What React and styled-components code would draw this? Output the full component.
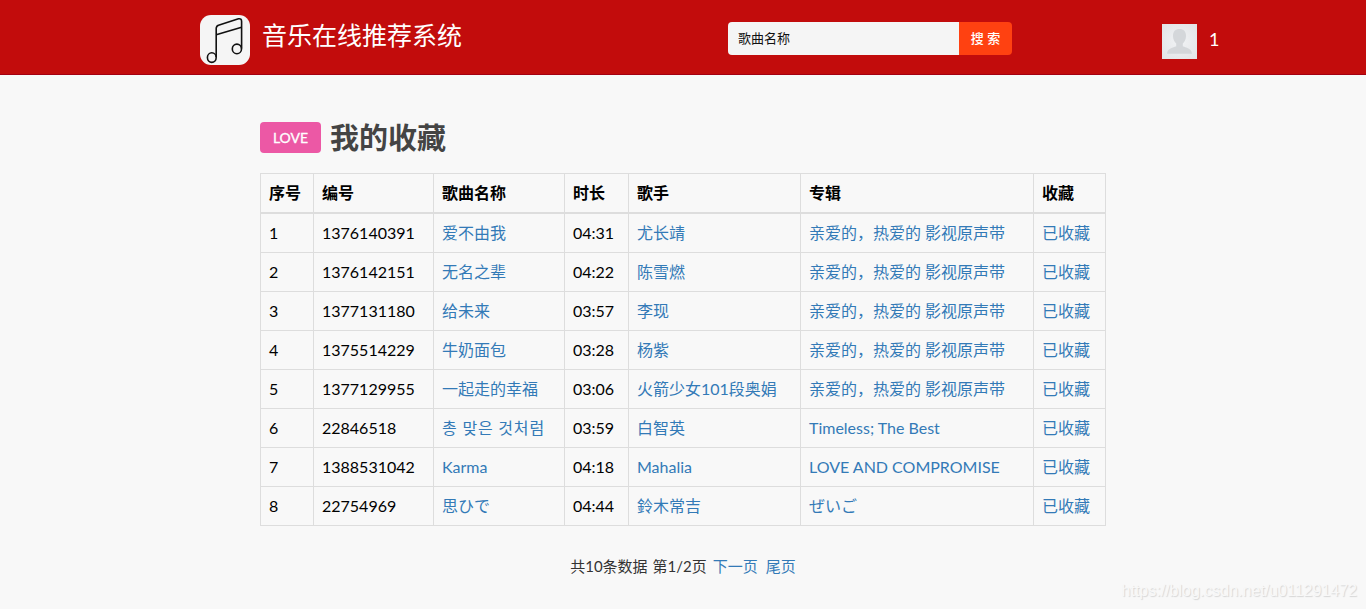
import React from "react";
import styled, { createGlobalStyle } from "styled-components";

const GlobalStyle = createGlobalStyle`
  *, *::before, *::after { box-sizing: border-box; }
  html, body { margin: 0; padding: 0; }
  body {
    background: #f8f8f8;
    color: #000;
    font-family: Lato, "Noto Sans CJK SC", sans-serif;
    font-size: 16px;
  }
`;

const Page = styled.div`
  position: relative;
  width: 1366px;
  height: 609px;
  overflow: hidden;
`;

const Header = styled.header`
  display: flex;
  align-items: flex-start;
  height: 75px;
  padding-left: 200px;
  background: #c20c0c;
  border-bottom: 1px solid #a40011;
`;

const Logo = styled.svg`
  display: block;
  flex: none;
  width: 50px;
  height: 50px;
  margin-top: 15px;
`;

const SiteName = styled.div`
  width: 466px;
  margin: 15px 0 0 12px;
  color: #fff;
  font-size: 25px;
  line-height: 40px;
  white-space: nowrap;
`;

const Search = styled.form`
  display: flex;
  width: 284px;
  height: 33px;
  margin-top: 22px;
  border-radius: 4px;
  overflow: hidden;
  font-size: 13px;
  line-height: 33px;
`;

const SearchInput = styled.input`
  width: 231px;
  height: 33px;
  padding: 0 10px;
  border: 0;
  outline: 0;
  background: #f5f5f5;
  color: #111;
  font: inherit;

  &::placeholder {
    color: #111;
    opacity: 1;
  }
`;

const SearchButton = styled.button`
  flex: 1;
  padding: 0;
  border: 0;
  background: #ff4111;
  color: #fff;
  font: inherit;
  font-weight: 500;
  white-space: pre;
`;

const User = styled.div`
  display: flex;
  margin: 24px 0 0 150px;
  color: #fff;
  font-size: 18px;
  line-height: 31px;
`;

const Avatar = styled.svg`
  display: block;
  width: 35px;
  height: 35px;
  margin-right: 12px;
`;

const Main = styled.main`
  width: 846px;
  margin: 0 auto;
  padding-top: 43px;
`;

const TitleRow = styled.div`
  display: flex;
  align-items: center;
  height: 39px;
  margin-bottom: 16px;
`;

const LoveTag = styled.span`
  width: 61px;
  height: 31px;
  margin-right: 9px;
  border-radius: 4px;
  background: #ec58a5;
  color: #fff;
  font-size: 14px;
  font-weight: 400;
  line-height: 32px;
  text-align: center;
  -webkit-text-stroke: 0.3px #fff;
`;

const Title = styled.h1`
  margin: 0;
  color: #444;
  font-size: 29px;
  font-weight: 700;
  line-height: 39px;
`;

const Table = styled.table`
  width: 846px;
  table-layout: fixed;
  border-collapse: separate;
  border-spacing: 0;
  border: solid #ddd;
  border-width: 0 1px 1px 0;
`;

const Col = styled.col`
  width: ${(p) => p.$w}px;
`;

const HeadCell = styled.th`
  height: 39px;
  padding: 0 8px;
  border: solid #ddd;
  border-width: 1px 0 0 1px;
  font-weight: 700;
  line-height: 24px;
  text-align: left;
  white-space: nowrap;
`;

const Row = styled.tr`
  height: ${(p) => (p.$first ? 40 : 39)}px;

  & > td {
    border-top-width: ${(p) => (p.$first ? 2 : 1)}px;
  }
`;

const Cell = styled.td`
  padding: 0 8px;
  border: solid #ddd;
  border-width: 1px 0 0 1px;
  line-height: 24px;
  white-space: nowrap;
`;

const Link = styled.a`
  color: #337ab7;
  text-decoration: none;
  letter-spacing: ${(p) => (p.lang === "ko" ? "0.8px" : "normal")};
  font-family: Lato,
    ${(p) =>
      p.lang === "ko"
        ? '"Noto Sans CJK KR"'
        : p.lang === "ja"
        ? '"Noto Sans CJK JP"'
        : '"Noto Sans CJK SC"'},
    sans-serif;
`;

const Pager = styled.nav`
  display: flex;
  justify-content: center;
  margin-top: 28px;
  color: #333;
  font-size: 15px;
  line-height: 24px;
  white-space: pre;
`;

const PageCount = styled.span`
  margin-left: 5px;
`;

const PagerLink = styled(Link)`
  margin-left: ${(p) => p.$gap}px;
`;

const Watermark = styled.div`
  position: absolute;
  right: 9px;
  bottom: 8px;
  color: #f8f8f8;
  font-family: "Liberation Sans", sans-serif;
  font-size: 16px;
  line-height: 20px;
  text-shadow: 1px 1px 1px #d6d6d6;
`;

const COLUMNS = [
  ["序号", 53],
  ["编号", 120],
  ["歌曲名称", 131],
  ["时长", 64],
  ["歌手", 172],
  ["专辑", 233],
  ["收藏", 72],
];

const OST = "亲爱的，热爱的 影视原声带";

const SONGS = [
  { id: "1376140391", name: "爱不由我", time: "04:31", singer: "尤长靖", album: OST },
  { id: "1376142151", name: "无名之辈", time: "04:22", singer: "陈雪燃", album: OST },
  { id: "1377131180", name: "给未来", time: "03:57", singer: "李现", album: OST },
  { id: "1375514229", name: "牛奶面包", time: "03:28", singer: "杨紫", album: OST },
  { id: "1377129955", name: "一起走的幸福", time: "03:06", singer: "火箭少女101段奥娟", album: OST },
  { id: "22846518", name: "총 맞은 것처럼", time: "03:59", singer: "白智英", album: "Timeless; The Best", lang: "ko" },
  { id: "1388531042", name: "Karma", time: "04:18", singer: "Mahalia", album: "LOVE AND COMPROMISE" },
  { id: "22754969", name: "思ひで", time: "04:44", singer: "鈴木常吉", album: "ぜいご", lang: "ja" },
];

function MusicLogo() {
  return (
    <Logo viewBox="0 0 50 50">
      <rect width="50" height="50" rx="11" fill="#f5f5f5" />
      <g fill="none" stroke="#111" strokeWidth="1.6" strokeLinejoin="round">
        <path d="M16.2 42V13.5Q16.2 11 18.5 10.2L38.5 3.8Q41.6 3.2 41.6 6.5V33.5" />
        <path d="M16.2 19.8L41.6 12.2" />
        <ellipse cx="11.8" cy="42.6" rx="4.4" ry="4.8" />
        <ellipse cx="36.9" cy="33.9" rx="4.6" ry="4.8" />
      </g>
    </Logo>
  );
}

function UserAvatar() {
  return (
    <Avatar viewBox="0 0 35 35">
      <defs>
        <radialGradient id="avatarBg" cx="50%" cy="50%" r="70%">
          <stop offset="0" stopColor="#f1f3f5" />
          <stop offset="1" stopColor="#e2e4e6" />
        </radialGradient>
      </defs>
      <rect width="35" height="35" fill="url(#avatarBg)" />
      <path
        d="M17.5 5C13.4 5 11 7.6 11 11.7C11 15.2 12.3 17.8 14.2 19.5V22.3C11.2 23.8 5.5 24 5 29.8H30C29.5 24 23.8 23.8 20.8 22.3V19.5C22.7 17.8 24 15.2 24 11.7C24 7.6 21.6 5 17.5 5Z"
        fill="#d4d7da"
      />
    </Avatar>
  );
}

export default function App() {
  return (
    <Page>
      <GlobalStyle />
      <Header>
        <MusicLogo />
        <SiteName>音乐在线推荐系统</SiteName>
        <Search onSubmit={(e) => e.preventDefault()}>
          <SearchInput placeholder="歌曲名称" />
          <SearchButton>搜 索</SearchButton>
        </Search>
        <User>
          <UserAvatar />
          <span>1</span>
        </User>
      </Header>
      <Main>
        <TitleRow>
          <LoveTag>LOVE</LoveTag>
          <Title>我的收藏</Title>
        </TitleRow>
        <Table>
          <colgroup>
            {COLUMNS.map(([label, w]) => (
              <Col key={label} $w={w} />
            ))}
          </colgroup>
          <thead>
            <tr>
              {COLUMNS.map(([label]) => (
                <HeadCell key={label}>{label}</HeadCell>
              ))}
            </tr>
          </thead>
          <tbody>
            {SONGS.map((s, i) => (
              <Row key={s.id} $first={i === 0}>
                <Cell>{i + 1}</Cell>
                <Cell>{s.id}</Cell>
                <Cell><Link lang={s.lang}>{s.name}</Link></Cell>
                <Cell>{s.time}</Cell>
                <Cell><Link>{s.singer}</Link></Cell>
                <Cell><Link lang={s.lang === "ja" ? "ja" : undefined}>{s.album}</Link></Cell>
                <Cell><Link>已收藏</Link></Cell>
              </Row>
            ))}
          </tbody>
        </Table>
        <Pager>
          <span>共10条数据</span>
          <PageCount>第1/2页</PageCount>
          <PagerLink $gap={6}>下一页</PagerLink>
          <PagerLink $gap={8}>尾页</PagerLink>
        </Pager>
      </Main>
      <Watermark>https://blog.csdn.net/u011291472</Watermark>
    </Page>
  );
}
